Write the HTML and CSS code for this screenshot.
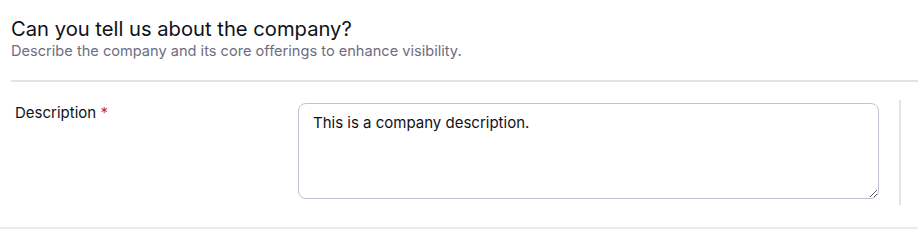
FILE: index.html
```html
<!DOCTYPE html>
<html lang="en">
<head>
<meta charset="utf-8">
<title>Company</title>
<link rel="stylesheet" href="styles.css">
</head>
<body>
<section class="section">
  <header class="head">
    <h2 class="title">Can you tell us about the company?</h2>
    <p class="subtitle">Describe the company and its core offerings to enhance visibility.</p>
  </header>
  <div class="divider"></div>
  <div class="row">
    <label class="label" for="desc">Description <span class="req">*</span></label>
    <textarea id="desc" class="field">This is a company description.</textarea>
    <div class="side"></div>
  </div>
</section>
</body>
</html>
```

FILE: styles.css
```css
html, body {
  margin: 0;
  padding: 0;
  background: #ffffff;
}
body {
  font-family: Inter, "Noto Sans", sans-serif;
  color: #111118;
  width: 918px;
  height: 231px;
  overflow: hidden;
}
.section {
  border-bottom: 2px solid #ecebf3;
  height: 229px;
  box-sizing: border-box;
}
.head {
  padding: 17px 11px 0;
  height: 64px;
  box-sizing: border-box;
}
.title {
  margin: 0;
  font-size: 20.2px;
  font-weight: 400;
  line-height: 24px;
  color: #111118;
}
.subtitle {
  margin: 0;
  font-size: 14.6px;
  line-height: 20px;
  color: #6e6d80;
}
.divider {
  margin: 16px 0 0 11px;
  height: 2px;
  background: #e3e2ea;
}
.row {
  display: flex;
  align-items: flex-start;
  padding: 18px 0 0;
}
.label {
  width: 298px;
  flex: none;
  padding-left: 15px;
  box-sizing: border-box;
  font-size: 15px;
  line-height: 20px;
  margin-top: 3px;
  color: #111118;
}
.req {
  color: #c8302c;
}
.field {
  flex: none;
  width: 581px;
  height: 96px;
  box-sizing: border-box;
  margin: 3px 0 0;
  padding: 9px 14px;
  border: 1px solid #c3c1d3;
  border-radius: 8px;
  font-family: Inter, "Noto Sans", sans-serif;
  font-size: 15px;
  line-height: 20px;
  color: #111118;
  background: #fff;
  outline: none;
  resize: vertical;
}
.side {
  flex: none;
  margin-left: 20px;
  width: 2px;
  height: 105px;
  background: #e3e2ea;
}
```
